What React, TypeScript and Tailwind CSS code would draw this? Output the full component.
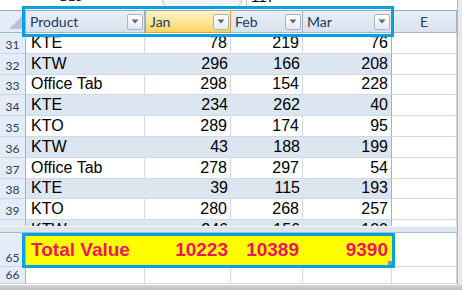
import React from "react";

type Row = { n: number; product: string; jan: number; feb: number; mar: number };

const rows: Row[] = [
  { n: 31, product: "KTE", jan: 78, feb: 219, mar: 76 },
  { n: 32, product: "KTW", jan: 296, feb: 166, mar: 208 },
  { n: 33, product: "Office Tab", jan: 298, feb: 154, mar: 228 },
  { n: 34, product: "KTE", jan: 234, feb: 262, mar: 40 },
  { n: 35, product: "KTO", jan: 289, feb: 174, mar: 95 },
  { n: 36, product: "KTW", jan: 43, feb: 188, mar: 199 },
  { n: 37, product: "Office Tab", jan: 278, feb: 297, mar: 54 },
  { n: 38, product: "KTE", jan: 39, feb: 115, mar: 193 },
  { n: 39, product: "KTO", jan: 280, feb: 268, mar: 257 },
];

const cols = "grid grid-cols-[26px_119px_86px_72px_89px_65px]";
const rowHead =
  "flex items-end justify-center pb-[2px] bg-[#e4ecf7] border-r border-r-[#9eb6ce] border-b border-b-[#c9d6e6] text-[12px] leading-none text-[#27415f] font-['Lato',sans-serif]";

function FilterBtn() {
  return (
    <div className="flex h-[16px] w-[16px] items-center justify-center rounded-[2px] border border-[#a7b5c6] bg-linear-to-b from-white to-[#e4eaf1]">
      <svg width="8" height="5" viewBox="0 0 8 5">
        <path d="M0.5 0.5 L7.5 0.5 L4 4.5 Z" fill="#5a6473" />
      </svg>
    </div>
  );
}

function HeadCell({ label, active }: { label: string; active?: boolean }) {
  return (
    <div
      className={`flex items-center justify-between pl-[4px] pr-[1px] text-[14px] text-[#243a5e] font-['Lato',sans-serif] ${
        active
          ? "border-x border-b border-[#e0a040] bg-linear-to-b from-[#fff3c8] to-[#fcd465]"
          : "border-r border-b border-[#9eb6ce] bg-linear-to-b from-[#e8eef6] to-[#d9e3ef]"
      }`}
    >
      <span>{label}</span>
      <FilterBtn />
    </div>
  );
}

function DataRow({ r }: { r: Row }) {
  const band = r.n % 2 === 0;
  const cell = band
    ? "bg-[#dce6f1] border-b border-[#cdd9e8]"
    : "bg-white border-r border-b border-[#d0d7e5]";
  return (
    <div className={`${cols} h-[20.8px]`}>
      <div className={rowHead}>{r.n}</div>
      <div className={`${cell} flex items-end pl-[5px] pb-[1px] text-[16px] leading-[18px]`}>{r.product}</div>
      <div className={`${cell} flex items-end justify-end pr-[3px] pb-[1px] text-[16px] leading-[18px]`}>{r.jan}</div>
      <div className={`${cell} flex items-end justify-end pr-[3px] pb-[1px] text-[16px] leading-[18px]`}>{r.feb}</div>
      <div
        className={`${
          band ? "bg-[#dce6f1] border-b border-[#cdd9e8]" : "bg-white border-b border-[#d0d7e5]"
        } border-r border-r-[#95b3d7] flex items-end justify-end pr-[3px] pb-[1px] text-[16px] leading-[18px]`}
      >
        {r.mar}
      </div>
      <div className="border-r border-b border-[#d0d7e5] bg-white" />
    </div>
  );
}

export default function App() {
  return (
    <div className="relative flex h-[290px] w-[462px] flex-col overflow-hidden bg-white font-['Liberation_Sans',Arial,sans-serif] text-black">
      <div className="flex flex-1">
        <div className="flex w-[457px] flex-col">
          {/* formula bar remnant */}
          <div className="flex h-[11px] items-end overflow-hidden border-b border-[#a0abb8] bg-white">
            <div className="mb-[7px] w-[142px] text-center text-[13px] leading-[13px] text-[#222]">B15</div>
            <div className="mb-[2px] ml-[20px] h-[9px] w-[80px] self-start rounded-b-[40px] border border-t-0 border-[#b9c3cf] bg-[#f2f5f8]" />
            <div className="ml-[4px] h-[11px] w-px bg-[#b7c0cb]" />
            <div className="mb-[7px] ml-[4px] text-[15px] leading-[13px]">117</div>
          </div>

          {/* column headers */}
          <div className={`${cols} h-[22px]`}>
            <div className="flex items-end justify-end border-r border-b border-[#9eb6ce] bg-[#e4ecf7] pr-[3px] pb-[3px]">
              <svg width="13" height="13" viewBox="0 0 13 13">
                <path d="M13 0 L13 13 L0 13 Z" fill="#b9c5d3" />
              </svg>
            </div>
            <HeadCell label="Product" />
            <HeadCell label="Jan" active />
            <HeadCell label="Feb" />
            <HeadCell label="Mar" />
            <div className="flex items-center justify-center border-r border-b border-[#9eb6ce] bg-linear-to-b from-[#e8eef6] to-[#d9e3ef] text-[14px] text-[#27415f] font-['Lato',sans-serif]">
              E
            </div>
          </div>

          {rows.map((r) => (
            <DataRow key={r.n} r={r} />
          ))}

          {/* row 40, cut by the split */}
          <div className="h-[6px] overflow-hidden">
            <DataRow r={{ n: 40, product: "KTW", jan: 246, feb: 156, mar: 100 }} />
          </div>

          {/* split bar */}
          <div className="h-[7px] border-t border-[#f3f6fa] border-b border-b-[#a9b8ca] bg-[#dde5ef]" />

          {/* total row */}
          <div className={`${cols} h-[34px]`}>
            <div className={rowHead}>65</div>
            <div className="flex items-center border-b border-[#d0d7e5] bg-[#ffff00] pl-[5px] pt-[1px] text-[19px] font-bold text-[#f0145f]">
              Total Value
            </div>
            <div className="flex items-center justify-end border-b border-[#d0d7e5] bg-[#ffff00] pr-[3px] pt-[1px] text-[19px] font-bold text-[#f0145f]">
              10223
            </div>
            <div className="flex items-center justify-end border-b border-[#d0d7e5] bg-[#ffff00] pr-[4px] pt-[1px] text-[19px] font-bold text-[#f0145f]">
              10389
            </div>
            <div className="flex items-center justify-end border-b border-[#d0d7e5] bg-[#ffff00] pr-[4px] pt-[1px] text-[19px] font-bold text-[#f0145f]">
              9390
            </div>
            <div className="border-r border-b border-[#d0d7e5]" />
          </div>

          {/* row 66 */}
          <div className={`${cols} h-[17px]`}>
            <div className={rowHead}>66</div>
            <div className="border-r border-b border-[#d0d7e5]" />
            <div className="border-r border-b border-[#d0d7e5]" />
            <div className="border-r border-b border-[#d0d7e5]" />
            <div className="border-r border-b border-[#d0d7e5]" />
            <div className="border-r border-b border-[#d0d7e5]" />
          </div>
        </div>
        <div className="w-[5px] border-l border-[#b4b4b4] bg-[#e9e9e9]" />
      </div>
      <div className="h-[5px] bg-linear-to-b from-[#d6d6d6] to-[#bcbcbc]" />

      {/* highlight boxes */}
      <div className="absolute top-[6px] left-[22px] h-[31px] w-[372px] border-[3px] border-[#06a1e3]" />
      <div className="absolute top-[233px] left-[22px] h-[35px] w-[373px] border-[3px] border-[#06a1e3]">
        <div className="absolute right-0 bottom-0 h-[4px] w-[4px] bg-[#8497ad]" />
      </div>
    </div>
  );
}
